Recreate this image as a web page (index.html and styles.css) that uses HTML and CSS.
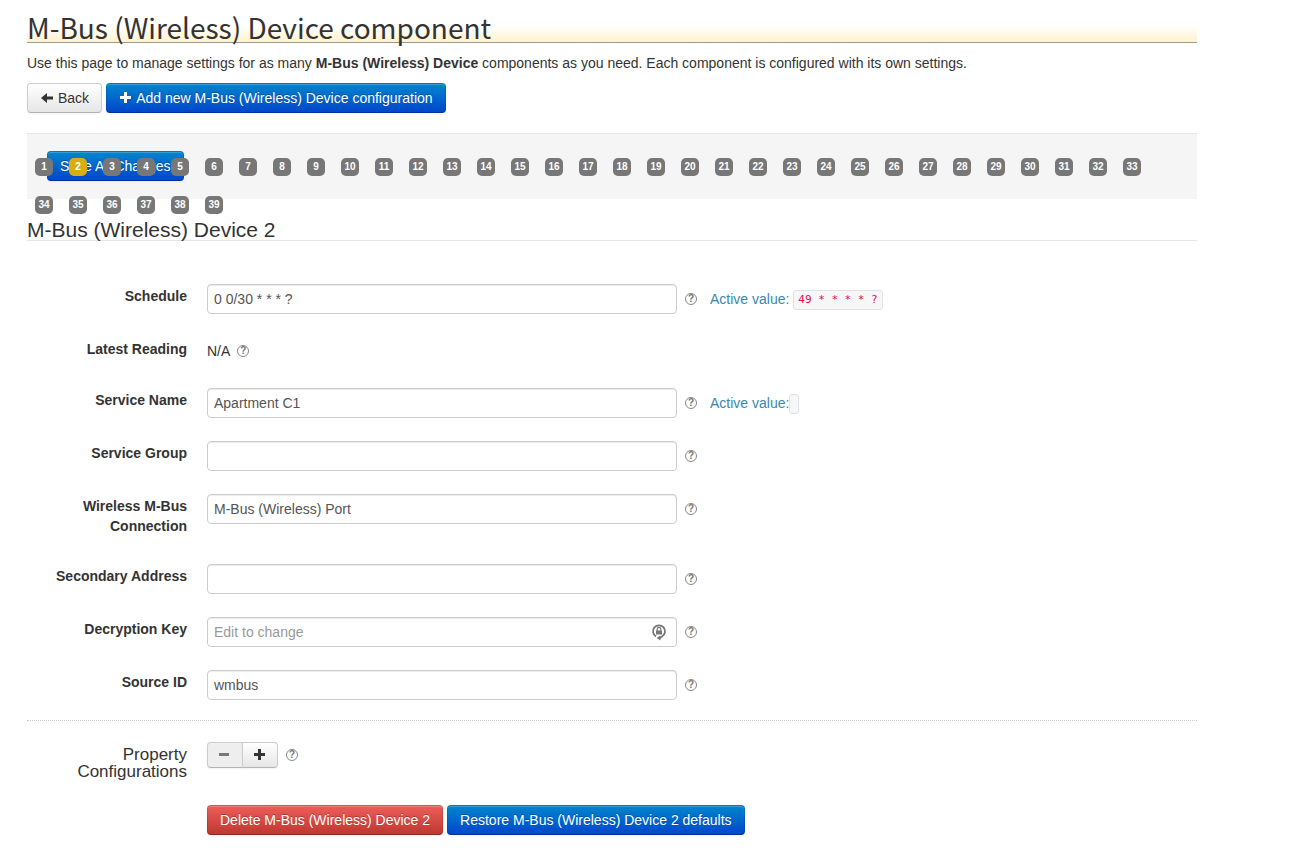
FILE: index.html
```html
<!DOCTYPE html>
<html lang="en">
<head>
<meta charset="UTF-8">
<meta name="viewport" content="width=device-width, initial-scale=1.0">
<title>M-Bus (Wireless) Device component</title>
<link rel="stylesheet" href="styles.css">
</head>
<body>
<div class="container">
    <h1>M-Bus (Wireless) Device component</h1>
    <p class="intro">Use this page to manage settings for as many <strong>M-Bus (Wireless) Device</strong> components as you need. Each component is configured with its own settings.</p>
    <div class="toolbar">
        <a class="btn" href="#"><svg class="icon" viewBox="0 0 14 14"><path d="M13 5.500v3H7V12L1 7l6-5v3.500z"/></svg>Back</a>
        <button type="button" class="btn btn-primary"><svg class="icon" viewBox="0 0 14 14"><path d="M5 1h3v4h4v3H8v4H5V8H1V5h4z"/></svg>Add new M-Bus (Wireless) Device configuration</button>
    </div>

    <form>
        <div class="form-actions">
            <button type="submit" class="btn btn-primary">Save All Changes</button>
            <ol class="pages" id="pages"></ol>
        </div>

        <h2>M-Bus (Wireless) Device 2</h2>

        <div class="control-group">
            <label for="schedule">Schedule</label>
            <div class="controls">
                <input type="text" id="schedule" value="0 0/30 * * * ?">
                <button type="button" class="help">?</button>
                <span class="active-value">Active value: <code>49 * * * * ?</code></span>
            </div>
        </div>
        <div class="control-group">
            <span class="label">Latest Reading</span>
            <div class="controls reading">
                <span>N/A</span>
                <button type="button" class="help">?</button>
            </div>
        </div>
        <div class="control-group">
            <label for="name">Service Name</label>
            <div class="controls">
                <input type="text" id="name" value="Apartment C1">
                <button type="button" class="help">?</button>
                <span class="active-value">Active value:<code></code></span>
            </div>
        </div>
        <div class="control-group">
            <label for="group">Service Group</label>
            <div class="controls">
                <input type="text" id="group">
                <button type="button" class="help">?</button>
            </div>
        </div>
        <div class="control-group">
            <label for="connection">Wireless M-Bus Connection</label>
            <div class="controls">
                <input type="text" id="connection" value="M-Bus (Wireless) Port">
                <button type="button" class="help">?</button>
            </div>
        </div>
        <div class="control-group">
            <label for="address">Secondary Address</label>
            <div class="controls">
                <input type="text" id="address">
                <button type="button" class="help">?</button>
            </div>
        </div>
        <div class="control-group">
            <label for="key">Decryption Key</label>
            <div class="controls">
                <div class="key-field">
                    <input type="password" id="key" placeholder="Edit to change">
                    <svg class="lock" viewBox="0 0 16 18">
                        <path d="M5 13.500A6 6 0 1 1 11 13.500L8 15.500" fill="none" stroke="#777" stroke-width="1.800"/>
                        <path d="M9.500 12.500v5L5.500 15z" fill="#777"/>
                        <path d="M6.200 8V6.200a1.800 1.800 0 0 1 3.600 0V8" fill="none" stroke="#777" stroke-width="1.200"/>
                        <path d="M5 7.500h6v4H5z" fill="#777"/>
                    </svg>
                </div>
                <button type="button" class="help">?</button>
            </div>
        </div>
        <div class="control-group">
            <label for="source">Source ID</label>
            <div class="controls">
                <input type="text" id="source" value="wmbus">
                <button type="button" class="help">?</button>
            </div>
        </div>

        <div class="properties">
            <span class="properties-label">Property Configurations</span>
            <div class="controls">
                <div class="btn-group">
                    <button type="button" class="btn" aria-label="Remove" disabled><svg class="icon" viewBox="0 0 14 14"><path d="M1 5h10v3H1z"/></svg></button>
                    <button type="button" class="btn" aria-label="Add"><svg class="icon" viewBox="0 0 14 14"><path d="M5 1h3v4h4v3H8v4H5V8H1V5h4z"/></svg></button>
                </div>
                <button type="button" class="help">?</button>
            </div>
        </div>

        <div class="bottom">
            <button type="button" class="btn btn-danger">Delete M-Bus (Wireless) Device 2</button>
            <button type="button" class="btn btn-primary">Restore M-Bus (Wireless) Device 2 defaults</button>
        </div>
    </form>
</div>

<script>
    const pages = document.getElementById("pages");
    for (let i = 1; i <= 39; i++) {
        const item = document.createElement("li");
        const link = document.createElement("a");
        link.href = "#" + i;
        link.textContent = i;
        if (i === 2) {
            link.className = "active";
        }
        item.appendChild(link);
        pages.appendChild(item);
    }
</script>
</body>
</html>
```
FILE: styles.css
```css
* {
    box-sizing: border-box;
}

body {
    margin: 0;
    padding: 10px 27px 20px;
    background: #fff;
    color: #333;
    font-family: Arial, "Liberation Sans", sans-serif;
    font-size: 14px;
    line-height: 20px;
}

.container {
    max-width: 1170px;
}

h1 {
    margin: 0 0 10px;
    height: 33px;
    border-bottom: 1px solid #999;
    background: linear-gradient(#fff 50%, #fff2cc);
    font-family: "Noto Sans CJK SC", sans-serif;
    font-size: 28px;
    font-weight: normal;
    line-height: 34px;
}

h2 {
    margin: 21px 0 43px;
    border-bottom: 1px solid #e5e5e5;
    font-size: 21px;
    font-weight: normal;
    line-height: 20px;
}

.intro {
    margin: 0 0 10px;
}

/* BUTTONS */
.btn {
    display: inline-flex;
    align-items: center;
    justify-content: center;
    height: 30px;
    padding: 0 12px;
    border: 1px solid #ccc;
    border-bottom-color: #b3b3b3;
    border-radius: 4px;
    background: linear-gradient(#fff, #e6e6e6);
    box-shadow: inset 0 1px 0 rgba(255, 255, 255, 0.2), 0 1px 2px rgba(0, 0, 0, 0.05);
    color: #333;
    font-family: inherit;
    font-size: 14px;
    line-height: 20px;
    text-decoration: none;
    text-shadow: 0 1px 1px rgba(255, 255, 255, 0.75);
    cursor: pointer;
}

.btn-primary,
.btn-danger {
    color: #fff;
    text-shadow: 0 -1px 0 rgba(0, 0, 0, 0.25);
    border-color: rgba(0, 0, 0, 0.1) rgba(0, 0, 0, 0.1) rgba(0, 0, 0, 0.25);
    background: linear-gradient(#08c, #04c) border-box;
}

.btn-danger {
    background: linear-gradient(#ee5f5b, #bd362f) border-box;
}

.icon {
    width: 14px;
    height: 14px;
    fill: currentColor;
}

.toolbar,
.bottom {
    display: flex;
    flex-wrap: wrap;
    gap: 4px;
}

.toolbar .icon {
    margin-right: 4px;
}

.toolbar .btn-primary .icon {
    margin-right: 3px;
}

/* SAVE BAR */
.form-actions {
    position: relative;
    margin-top: 20px;
    padding: 17px 20px 18px;
    border-top: 1px solid #e5e5e5;
    background: #f5f5f5;
}

.form-actions .btn {
    display: flex;
}

.pages {
    position: absolute;
    top: 24px;
    left: 8px;
    right: 40px;
    display: flex;
    flex-wrap: wrap;
    gap: 20px 16px;
    margin: 0;
    padding: 0;
    list-style: none;
}

.pages a {
    display: block;
    width: 18px;
    height: 18px;
    border-radius: 5px;
    background: #777;
    color: #fff;
    font-size: 10px;
    font-weight: bold;
    line-height: 18px;
    text-align: center;
    text-decoration: none;
}

.pages a.active {
    background: #d9ae14;
}

/* FIELDS */
.control-group {
    display: flex;
    gap: 20px;
    margin-bottom: 23px;
}

.control-group label,
.label {
    width: 160px;
    padding: 2px 0 5px;
    font-weight: bold;
    text-align: right;
}

.controls {
    display: flex;
    align-items: center;
    align-self: flex-start;
    gap: 8px;
}

.reading {
    height: 28px;
    gap: 7px;
}

input {
    width: 470px;
    height: 30px;
    padding: 4px 6px;
    border: 1px solid #ccc;
    border-radius: 4px;
    box-shadow: inset 0 1px 1px rgba(0, 0, 0, 0.075);
    color: #555;
    font-family: inherit;
    font-size: 14px;
}

input::placeholder {
    color: #999;
}

.help {
    width: 12px;
    height: 12px;
    padding: 0;
    border: 1px solid #888;
    border-radius: 50%;
    background: none;
    color: #777;
    font-family: inherit;
    font-size: 10px;
    font-weight: bold;
    line-height: 10px;
    text-align: center;
    cursor: pointer;
}

.active-value {
    display: flex;
    align-items: center;
    margin-left: 5px;
    color: #3a87ad;
    white-space: pre;
}

code {
    height: 20px;
    margin-top: 1px;
    padding: 0 4px;
    border: 1px solid #e1e1e8;
    border-radius: 3px;
    background: #f7f7f9;
    color: #d14;
    font-family: "DejaVu Sans Mono", monospace;
    font-size: 11px;
    line-height: 18px;
}

.key-field {
    position: relative;
}

.key-field input {
    display: block;
}

.lock {
    position: absolute;
    top: 6px;
    right: 10px;
    width: 16px;
    height: 18px;
}

/* PROPERTIES */
.properties {
    display: flex;
    gap: 20px;
    margin-top: -3px;
    padding-top: 21px;
    border-top: 1px dotted #ccc;
}

.properties-label {
    width: 160px;
    padding-top: 4px;
    font-size: 17px;
    line-height: 17px;
    text-align: right;
}

.btn-group {
    display: flex;
}

.btn-group .btn {
    width: 36px;
    height: 26px;
    padding: 0;
}

.btn-group .btn:first-child {
    border-radius: 4px 0 0 4px;
}

.btn-group .btn:last-child {
    margin-left: -1px;
    border-radius: 0 4px 4px 0;
}

.btn-group .btn:disabled {
    background: #eee;
    color: #777;
    cursor: default;
}

.bottom {
    margin: 25px 0 0 180px;
}

@media (max-width: 800px) {
    .control-group,
    .properties {
        flex-direction: column;
        gap: 4px;
    }

    .control-group label,
    .label {
        text-align: left;
    }

    .controls {
        flex-wrap: wrap;
    }

    input {
        max-width: 100%;
    }

    .bottom {
        margin-left: 0;
    }
}
```
